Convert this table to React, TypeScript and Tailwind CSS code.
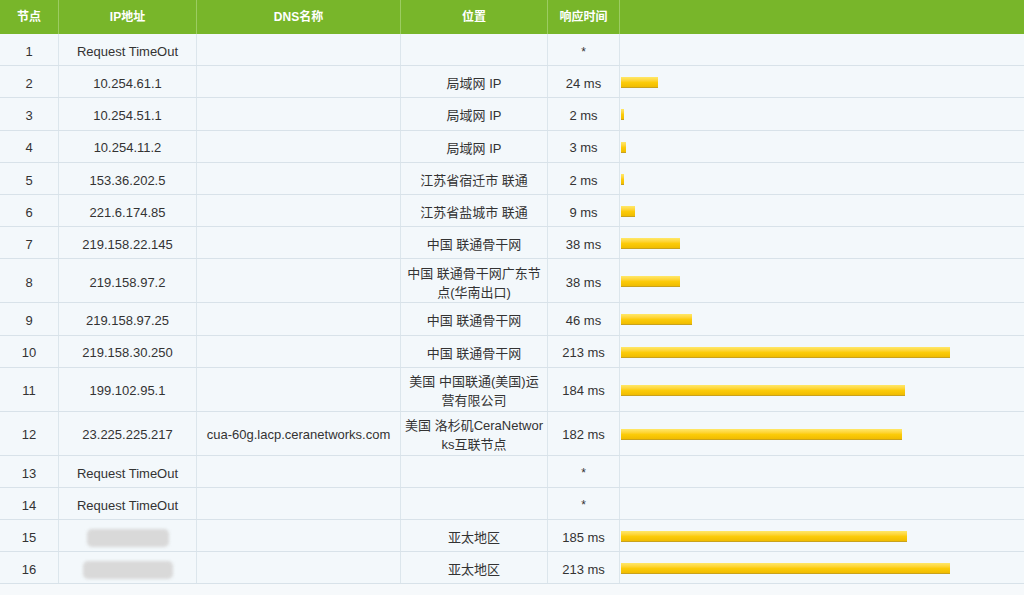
import React from "react";

type Hop = {
  id: number;
  ip: string;
  dns?: string;
  loc?: string;
  time?: number;
  tall?: boolean;
  blur?: number;
};

const hops: Hop[] = [
  { id: 1, ip: "Request TimeOut" },
  { id: 2, ip: "10.254.61.1", loc: "局域网 IP", time: 24 },
  { id: 3, ip: "10.254.51.1", loc: "局域网 IP", time: 2 },
  { id: 4, ip: "10.254.11.2", loc: "局域网 IP", time: 3 },
  { id: 5, ip: "153.36.202.5", loc: "江苏省宿迁市 联通", time: 2 },
  { id: 6, ip: "221.6.174.85", loc: "江苏省盐城市 联通", time: 9 },
  { id: 7, ip: "219.158.22.145", loc: "中国 联通骨干网", time: 38 },
  { id: 8, ip: "219.158.97.2", loc: "中国 联通骨干网广东节点(华南出口)", time: 38, tall: true },
  { id: 9, ip: "219.158.97.25", loc: "中国 联通骨干网", time: 46 },
  { id: 10, ip: "219.158.30.250", loc: "中国 联通骨干网", time: 213 },
  { id: 11, ip: "199.102.95.1", loc: "美国 中国联通(美国)运营有限公司", time: 184, tall: true },
  {
    id: 12,
    ip: "23.225.225.217",
    dns: "cua-60g.lacp.ceranetworks.com",
    loc: "美国 洛杉矶CeraNetworks互联节点",
    time: 182,
    tall: true,
  },
  { id: 13, ip: "Request TimeOut" },
  { id: 14, ip: "Request TimeOut" },
  { id: 15, ip: "", loc: "亚太地区", time: 185, blur: 82 },
  { id: 16, ip: "", loc: "亚太地区", time: 213, blur: 90 },
];

const font = { fontFamily: '"Liberation Sans", "Noto Sans CJK SC", sans-serif' };

function Cell({ w, children }: { w: string; children?: React.ReactNode }) {
  return (
    <div
      className={`${w} shrink-0 flex items-center justify-center text-center px-[3px] pt-[4px] border-r border-[#dce6ec]`}
    >
      {children}
    </div>
  );
}

export default function App() {
  return (
    <div className="w-[1024px] h-[595px] bg-[#f6f9fb] text-[#333] text-[13px] overflow-hidden" style={font}>
      <div className="flex h-[34px] bg-[#78b62a] text-white font-bold text-[12px]">
        {[
          ["w-[59px]", "节点"],
          ["w-[138px]", "IP地址"],
          ["w-[204px]", "DNS名称"],
          ["w-[147px]", "位置"],
          ["w-[72px]", "响应时间"],
        ].map(([w, t]) => (
          <div key={t} className={`${w} shrink-0 flex items-center justify-center border-r border-[#9ccc62]`}>
            {t}
          </div>
        ))}
        <div className="flex-1" />
      </div>
      {hops.map((h) => (
        <div
          key={h.id}
          className={`flex border-b border-[#d8e2e9] bg-[#f3f8fb] ${h.tall ? "h-[44px]" : "h-[32.2px]"}`}
        >
          <Cell w="w-[59px]">{h.id}</Cell>
          <Cell w="w-[138px]">
            {h.blur ? (
              <div className="h-[18px] rounded-[5px] bg-[#d9d9d9] blur-[1.5px]" style={{ width: h.blur }} />
            ) : (
              h.ip
            )}
          </Cell>
          <Cell w="w-[204px]">{h.dns}</Cell>
          <Cell w="w-[147px]">
            <span className="leading-[19px] break-all">{h.loc}</span>
          </Cell>
          <Cell w="w-[72px]">{h.time === undefined ? <span className="text-[12px]">*</span> : `${h.time} ms`}</Cell>
          <div className="flex-1 flex items-center pl-[1px] pt-[2px]">
            {h.time !== undefined && (
              <div
                className="h-[11px] bg-linear-to-b from-[#ffe866] via-[#fdcd0a] to-[#f0bc00] border-b border-[#c9a21c]"
                style={{ width: Math.max(3, Math.round(h.time * 1.545)) }}
              />
            )}
          </div>
        </div>
      ))}
    </div>
  );
}
